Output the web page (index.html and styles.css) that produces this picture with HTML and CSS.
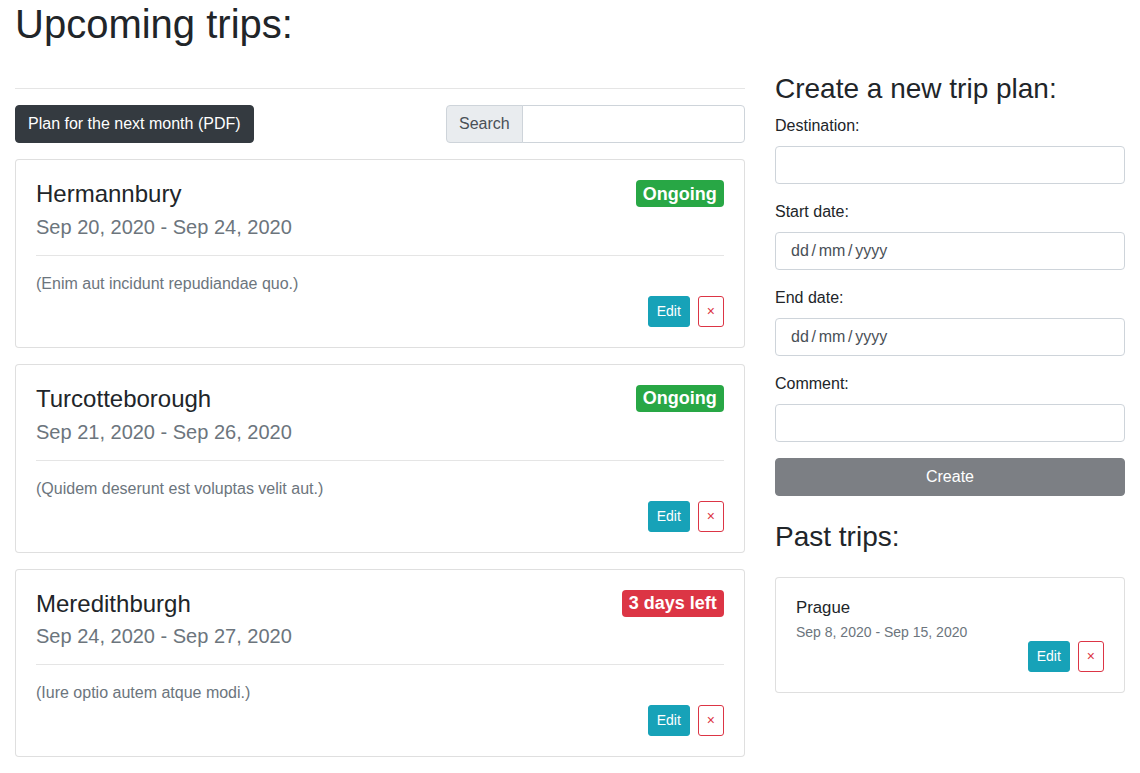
FILE: index.html
```html
<!DOCTYPE html>
<html lang="en">
<head>
<meta charset="utf-8">
<title>Trips</title>
<link rel="stylesheet" href="styles.css">
</head>
<body>
<div class="container">
  <h1 class="page-title">Upcoming trips:</h1>
  <div class="layout">
    <main class="upcoming">
      <hr class="divider">
      <div class="toolbar">
        <button class="btn btn-dark">Plan for the next month (PDF)</button>
        <div class="input-group">
          <span class="input-group-text">Search</span>
          <input class="form-control search-input" type="text">
        </div>
      </div>

      <div class="card trip">
        <div class="card-body">
          <div class="trip-head">
            <h4 class="trip-title">Hermannbury</h4>
            <span class="badge badge-success">Ongoing</span>
          </div>
          <h5 class="trip-dates">Sep 20, 2020 - Sep 24, 2020</h5>
          <hr class="card-rule">
          <p class="trip-comment">(Enim aut incidunt repudiandae quo.)</p>
          <div class="actions">
            <button class="btn btn-sm btn-info">Edit</button>
            <button class="btn btn-sm btn-outline-danger">×</button>
          </div>
        </div>
      </div>

      <div class="card trip">
        <div class="card-body">
          <div class="trip-head">
            <h4 class="trip-title">Turcotteborough</h4>
            <span class="badge badge-success">Ongoing</span>
          </div>
          <h5 class="trip-dates">Sep 21, 2020 - Sep 26, 2020</h5>
          <hr class="card-rule">
          <p class="trip-comment">(Quidem deserunt est voluptas velit aut.)</p>
          <div class="actions">
            <button class="btn btn-sm btn-info">Edit</button>
            <button class="btn btn-sm btn-outline-danger">×</button>
          </div>
        </div>
      </div>

      <div class="card trip">
        <div class="card-body">
          <div class="trip-head">
            <h4 class="trip-title">Meredithburgh</h4>
            <span class="badge badge-danger">3 days left</span>
          </div>
          <h5 class="trip-dates">Sep 24, 2020 - Sep 27, 2020</h5>
          <hr class="card-rule">
          <p class="trip-comment">(Iure optio autem atque modi.)</p>
          <div class="actions">
            <button class="btn btn-sm btn-info">Edit</button>
            <button class="btn btn-sm btn-outline-danger">×</button>
          </div>
        </div>
      </div>
    </main>

    <aside class="sidebar">
      <h3 class="side-title">Create a new trip plan:</h3>
      <form class="trip-form">
        <div class="form-group">
          <label class="form-label">Destination:</label>
          <input class="form-control" type="text">
        </div>
        <div class="form-group">
          <label class="form-label">Start date:</label>
          <input class="form-control date-input" type="text" placeholder="dd / mm / yyyy">
        </div>
        <div class="form-group">
          <label class="form-label">End date:</label>
          <input class="form-control date-input" type="text" placeholder="dd / mm / yyyy">
        </div>
        <div class="form-group">
          <label class="form-label">Comment:</label>
          <input class="form-control" type="text">
        </div>
        <button class="btn btn-secondary btn-block" type="button">Create</button>
      </form>

      <h3 class="side-title past-title">Past trips:</h3>
      <div class="card past">
        <div class="card-body">
          <h5 class="past-name">Prague</h5>
          <div class="past-dates">Sep 8, 2020 - Sep 15, 2020</div>
          <div class="actions">
            <button class="btn btn-sm btn-info">Edit</button>
            <button class="btn btn-sm btn-outline-danger">×</button>
          </div>
        </div>
      </div>
    </aside>
  </div>
</div>
</body>
</html>
```

FILE: styles.css
```css
* { box-sizing: border-box; }

html, body {
  margin: 0;
  padding: 0;
  background: #fff;
}

body {
  font-family: "Liberation Sans", Arial, Helvetica, sans-serif;
  font-size: 16px;
  line-height: 1.5;
  color: #212529;
}

h1, h3, h4, h5, p { margin: 0; font-weight: 500; }

.container {
  width: 1140px;
  padding: 0 15px;
}

.page-title {
  font-size: 40px;
  line-height: 1.2;
  margin-bottom: 24px;
}

.layout {
  display: grid;
  grid-template-columns: 730px 350px;
  column-gap: 30px;
  align-items: start;
}

.divider {
  margin: 16px 0;
  border: 0;
  border-top: 1px solid rgba(0,0,0,.1);
}

.toolbar {
  display: flex;
  justify-content: space-between;
  align-items: center;
  margin-bottom: 16px;
}

.btn {
  display: inline-block;
  font-family: inherit;
  font-weight: 400;
  font-size: 16px;
  line-height: 1.5;
  padding: 6px 12px;
  border: 1px solid transparent;
  border-radius: 4px;
  text-align: center;
  cursor: pointer;
}

.btn-dark {
  background: #343a40;
  border-color: #343a40;
  color: #fff;
}

.btn-secondary {
  background: #7c7f84;
  border-color: #7c7f84;
  color: #fff;
}

.btn-block {
  display: block;
  width: 100%;
}

.btn-sm {
  font-size: 14px;
  padding: 4px 8px;
  border-radius: 3px;
}

.btn-info {
  background: #17a2b8;
  border-color: #17a2b8;
  color: #fff;
}

.btn-outline-danger {
  background: #fff;
  border-color: #dc3545;
  color: #dc3545;
}

.input-group {
  display: flex;
  width: 299px;
}

.input-group-text {
  display: flex;
  align-items: center;
  padding: 6px 12px;
  font-size: 16px;
  line-height: 1.5;
  color: #495057;
  background: #e9ecef;
  border: 1px solid #ced4da;
  border-radius: 4px 0 0 4px;
  white-space: nowrap;
}

.form-control {
  display: block;
  width: 100%;
  height: 38px;
  padding: 6px 12px;
  font-family: inherit;
  font-size: 16px;
  line-height: 1.5;
  color: #495057;
  background: #fff;
  border: 1px solid #ced4da;
  border-radius: 4px;
  outline: none;
}

.search-input {
  flex: 1 1 auto;
  min-width: 0;
  margin-left: -1px;
  border-radius: 0 4px 4px 0;
}

.date-input { padding-left: 15px; word-spacing: -1.75px; }
.date-input::placeholder { color: #495057; opacity: 1; word-spacing: -1.75px; }

.card {
  border: 1px solid rgba(0,0,0,.125);
  border-radius: 4px;
  background: #fff;
}

.card-body { padding: 20px; }

.trip { margin-bottom: 16px; }

.trip-head {
  display: flex;
  justify-content: space-between;
  align-items: flex-start;
  margin-bottom: 6px;
}

.trip-title {
  font-size: 24px;
  line-height: 1.2;
}

.badge {
  display: inline-block;
  font-size: 18px;
  font-weight: 700;
  line-height: 1;
  padding: 4.5px 7.2px;
  border-radius: 4px;
  color: #fff;
  white-space: nowrap;
}

.badge-success { background: #28a745; }
.badge-danger { background: #dc3545; }

.trip-dates {
  font-size: 20px;
  line-height: 1.2;
  color: #6c757d;
}

.card-rule {
  margin: 16px 0;
  border: 0;
  border-top: 1px solid rgba(0,0,0,.1);
}

.trip-comment {
  font-weight: 400;
  color: #6c757d;
}

.actions {
  display: flex;
  justify-content: flex-end;
  gap: 8px;
}

.side-title {
  font-size: 28px;
  line-height: 1.2;
  margin-bottom: 8px;
}

.form-group { margin-bottom: 16px; }

.form-label {
  display: inline-block;
  margin-bottom: 8px;
}

.past-title {
  margin-top: 24px;
  margin-bottom: 24px;
}

.past-name {
  font-size: 16.8px;
  line-height: 1.2;
  margin-bottom: 6px;
}

.past-dates {
  font-size: 14px;
  line-height: 1.2;
  color: #6c757d;
}
```
